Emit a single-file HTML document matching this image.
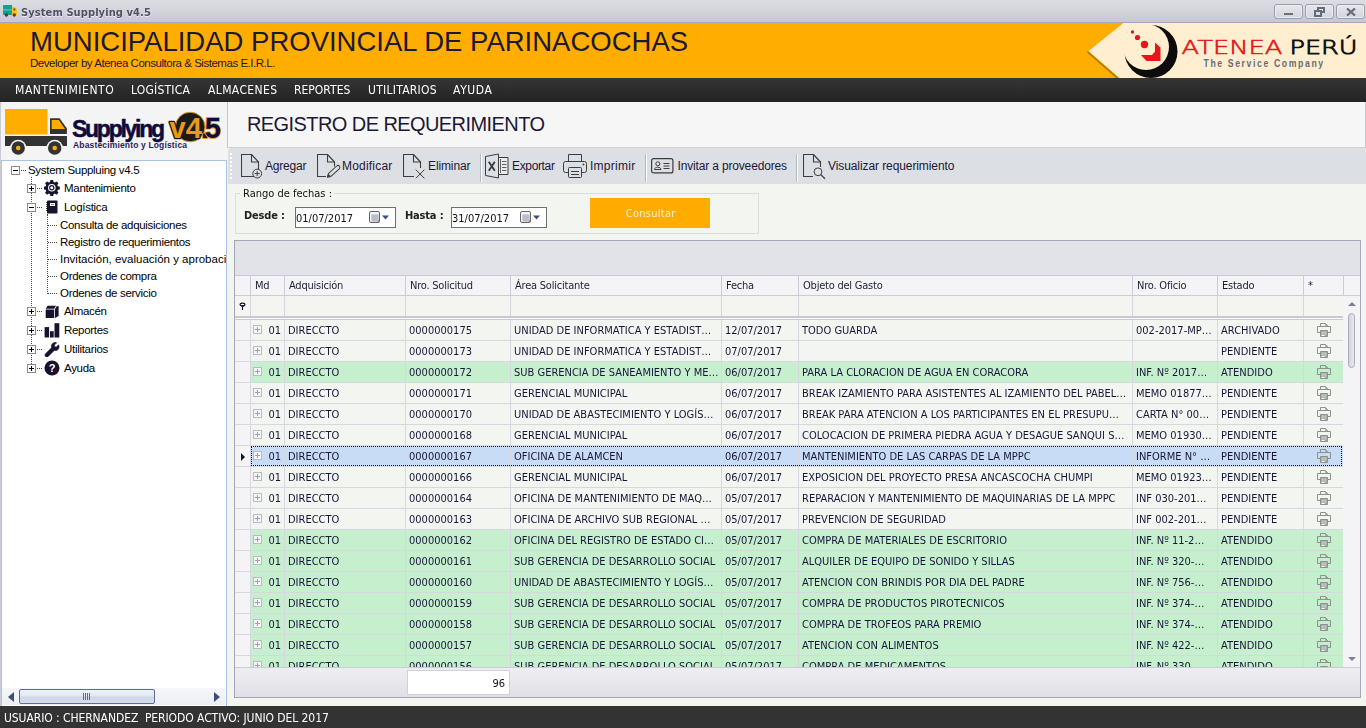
<!DOCTYPE html>
<html lang="es">
<head>
<meta charset="utf-8">
<title>System Supplying v4.5</title>
<style>
*{box-sizing:border-box;margin:0;padding:0}
html,body{width:1366px;height:728px;overflow:hidden}
body{position:relative;background:#f3f5f0;font-family:"DejaVu Sans","Liberation Sans",sans-serif;font-size:11px;color:#1b1b2b}
.k{display:inline-block;transform:scaleX(.9);transform-origin:0 50%;white-space:pre}
.kr{transform-origin:100% 50%}
.kc{transform-origin:50% 50%}
.abs{position:absolute}
i{font-style:normal}
/* title bar */
#tb{left:0;top:0;width:1366px;height:23px;background:linear-gradient(#dcdde2 0%,#d4d5dc 45%,#c6c8d2 100%);border-bottom:1px solid #a5a8ba}
#tb .ttl{left:21px;top:6px;font-weight:bold;font-size:11px;color:#4d5265;letter-spacing:.11px;white-space:pre;text-shadow:0 1px 0 #eee}
.wb{top:4px;width:29px;height:15px;border:1px solid #9a9dae;border-radius:3px;background:linear-gradient(#e6e7ec,#d2d4dc);box-shadow:inset 0 0 0 1px #ecedf1}
/* header */
#hd{left:0;top:23px;width:1366px;height:55px;background:#ffae00}
#hd h1{left:30px;top:3px;font-family:"Liberation Sans",sans-serif;font-weight:normal;font-size:27.5px;line-height:32px;color:#1c1836;white-space:pre}
#hd .sub{left:30px;top:33px;font-family:"Liberation Sans",sans-serif;font-size:11.5px;line-height:14px;color:#1c1836;white-space:pre;letter-spacing:-.47px}
/* menu */
#mn{left:0;top:78px;width:1366px;height:24px;background:linear-gradient(#353535,#232323)}
#mn span{position:absolute;top:4px;font-size:12px;line-height:16px;color:#fff;white-space:pre;font-family:"DejaVu Sans","Liberation Sans",sans-serif;transform:scaleX(.9);transform-origin:0 50%}
/* sidebar */
#sb{left:0;top:102px;width:227px;height:604px;background:#f4f4f4;border-left:1px solid #c8ccd4}
#tree{left:0;top:58px;width:226px;height:546px;background:#fff;border:1px solid #a9c3e6;border-bottom:none;overflow:hidden}
.tn{position:absolute;white-space:pre;font-family:"Liberation Sans",sans-serif;font-size:11.5px;line-height:14px;color:#000;letter-spacing:-.3px}
.bx{position:absolute;width:9px;height:9px;border:1px solid #8a8a8a;background:#fff}
.bx:before{content:"";position:absolute;left:1px;top:3px;width:5px;height:1px;background:#000}
.bx.p:after{content:"";position:absolute;left:3px;top:1px;width:1px;height:5px;background:#000}
.dv{position:absolute;width:0;border-left:1px dotted #444}
.dh{position:absolute;height:0;border-top:1px dotted #444}
/* main */
#spl{left:227px;top:102px;width:1px;height:46px;background:#c3c7d0}
#ttl{left:228px;top:102px;width:1138px;height:46px;background:#f6f6f6;border-bottom:1px solid #cdced6;border-right:1px solid #c4c5cc}
#ttl span{position:absolute;left:19px;top:8.500px;font-family:"Liberation Sans",sans-serif;font-size:20px;line-height:26px;color:#1c1836;white-space:pre;letter-spacing:-.58px}
#tool{left:228px;top:148px;width:1138px;height:36px;background:#dcdfe3;border-radius:4px 0 0 0}
#tool .t{position:absolute;top:10px;font-family:"Liberation Sans",sans-serif;font-size:12px;line-height:16px;color:#1c1836;white-space:pre}
#tool svg{position:absolute}
#tool .sp{position:absolute;top:6px;width:2px;height:28px;border-left:1px solid #b4b8c0;border-right:1px solid #fff}
.grip{position:absolute;left:2px;top:5px;width:2px;height:27px;background:repeating-linear-gradient(#fff 0 2px,transparent 2px 4px)}
/* filter group */
#grp{left:235px;top:193px;width:524px;height:41px;border:1px solid #dcdcdc}
#grp .lg{position:absolute;left:4px;top:-7px;width:94px;letter-spacing:0;padding:0 3px;background:#f3f5f0;line-height:14px;color:#111;white-space:pre}
.lb{position:absolute;font-weight:bold;white-space:pre;color:#222;line-height:14px;letter-spacing:-.2px;transform:scaleX(.9);transform-origin:0 50%}
.dt{position:absolute;top:207px;height:21px;border:1px solid #6f6f6f;background:#fff}
.dt span{position:absolute;left:0;top:4px;line-height:14px;color:#111;letter-spacing:0;white-space:pre;transform:scaleX(.9);transform-origin:0 50%}
#btn{left:590px;top:198px;width:120px;height:30px;background:#ffab00;color:#fff3d8;text-align:center;line-height:31px;letter-spacing:.3px;padding-left:1px}
/* grid */
#grid{left:234px;top:240px;width:1127px;height:458px;border:1px solid #a3a6b4;background:#f4f4f6;overflow:hidden}
#gp{left:0;top:0;width:1125px;height:35px;background:#e2e3e8;border-bottom:1px solid #c8cad4}
#hdr{left:0;top:35px;width:1125px;height:20px;background:#f4f4f7;border-bottom:1px solid #c9cbd5}
#hdr span{position:absolute;top:0;height:20px;line-height:19px;padding-left:4px;letter-spacing:-.25px;border-left:1px solid #c9cbd5;color:#1d1d33;white-space:pre}
#flt{left:0;top:55px;width:1108px;height:21px;background:#f4f5f1}
#flt span{position:absolute;top:0;height:21px;border-left:1px solid #d6d7de}
#sep{left:0;top:75px;width:1108px;height:4px;background:#fbfbfd;border-top:2px solid #c7c9d3;border-bottom:1px solid #c7c9d3}
#ind{left:0;top:55px;width:15px;height:371px;background:#f4f4f7}
.r{position:absolute;left:235px;width:1108px;height:21px;background:#f3f5f0;border-bottom:1px solid #d7d8df}
.r.g{background:#c6efce}
.r.s{background:#c9dcf5}
.sel{position:absolute;left:16px;top:0;width:1091px;height:20px;border:1px dotted #121230}
.ic{position:absolute;left:0;top:0;width:15px;height:20px;background:#f4f4f7}
.c{position:absolute;top:0;height:20px;line-height:22px;padding-left:3px;border-left:1px solid #d7d8df;white-space:pre;overflow:hidden;color:#16163a}
.c b{font-weight:normal}
.c.md{text-align:right;padding-right:3px}
.ex{position:absolute;left:2px;top:5px;width:9px;height:9px;border:1px solid #b9bcc4;background:#f6f6f8}
.ex:before{content:"";position:absolute;left:1px;top:3px;width:5px;height:1px;background:#9da0aa}
.ex:after{content:"";position:absolute;left:3px;top:1px;width:1px;height:5px;background:#9da0aa}
.c.pr svg{position:absolute;left:13px;top:3px}
.cur{position:absolute;left:6px;top:6.500px;width:0;height:0;border-left:4px solid #15152e;border-top:4px solid transparent;border-bottom:4px solid transparent}
#vs{left:1108px;top:55px;width:17px;height:371px;background:#f4f4f6}
#ft{left:0;top:426px;width:1125px;height:30px;background:linear-gradient(#eeeef2,#dfdfe6);border-top:1px solid #c9cbd5}
#ft b{font-weight:normal}
#hdr b{font-weight:normal}
#ft span{position:absolute;left:172px;top:2px;width:103px;height:25px;background:#fff;border:1px solid #d0d1d9;text-align:right;padding-right:4px;line-height:25px;color:#111}
/* status */
#st{left:0;top:706px;width:1366px;height:22px;background:#333;color:#fff;font-size:12px;line-height:25px;padding-left:4px;white-space:pre;letter-spacing:-.09px}
</style>
</head>
<body>

<!-- title bar -->
<div id="tb" class="abs">
 <svg class="abs" style="left:0;top:0" width="20" height="20" viewBox="0 0 20 20">
  <rect x="3" y="5" width="9.200" height="10" rx=".8" fill="#13a08c"/><rect x="3" y="9" width="9.200" height="1.600" fill="#4cb9a9"/>
  <path d="M12.200 7.200h3.300l1.600 2.800v5h-4.900z" fill="#ffc400"/><rect x="13.300" y="8.300" width="2" height="2.200" fill="#7a5a4a"/>
  <circle cx="6.400" cy="15" r="1.700" fill="#5a3a30"/><circle cx="14.300" cy="15" r="1.700" fill="#5a3a30"/>
 </svg>
 <span class="abs ttl k">System Supplying v4.5</span>
 <div class="abs wb" style="left:1274px"><i class="abs" style="left:9px;top:8px;width:9px;height:2px;background:#6a6f82"></i></div>
 <div class="abs wb" style="left:1305px">
  <i class="abs" style="left:11px;top:2px;width:8px;height:6px;border:2px solid #666b7c;border-top-width:2px"></i>
  <i class="abs" style="left:8px;top:5px;width:8px;height:7px;border:2px solid #666b7c;background:#dcdde3"></i>
 </div>
 <div class="abs wb" style="left:1336px"><svg class="abs" style="left:9px;top:3px" width="10" height="8" viewBox="0 0 10 8"><path d="M1 0.500l8 7M9 0.500l-8 7" stroke="#666b7c" stroke-width="2.200" fill="none"/></svg></div>
</div>

<!-- header -->
<div id="hd" class="abs">
 <h1 class="abs">MUNICIPALIDAD PROVINCIAL DE PARINACOCHAS</h1>
 <span class="abs sub">Developer by Atenea Consultora &amp; Sistemas E.I.R.L.</span>
 <svg class="abs" style="left:1080px;top:0" width="286" height="55" viewBox="1080 23 286 55">
  <path d="M1087.300 51.600L1118.300 78.800" stroke="#7a5c10" stroke-opacity=".6" stroke-width="1.800" fill="none"/>
  <path d="M1088.500 51L1123.500 23h242.500v55h-246.400z" fill="#ffefd0"/>
  <!-- crescent -->
  <mask id="mk" maskUnits="userSpaceOnUse" x="1080" y="23" width="286" height="55"><rect x="1080" y="23" width="286" height="55" fill="#fff"/><circle cx="1146" cy="47" r="23" fill="#000"/></mask><circle cx="1151" cy="51.500" r="26.500" fill="#0c0c0c" mask="url(#mk)"/>
  <circle cx="1132.500" cy="32" r="1.700" fill="#e3171b"/><circle cx="1137.500" cy="37.500" r="2.600" fill="#e3171b"/><circle cx="1144.500" cy="44.500" r="3.700" fill="#e3171b"/>
  <path d="M1155 42.500l5.500 5v13.500h-14l-5.500-6h11l3-3.500z" fill="#e3171b"/>
  <text x="1181.500" y="54" font-family="DejaVu Sans Light,Liberation Sans,sans-serif" font-weight="200" font-size="19.500" fill="#e3171b" stroke="#e3171b" stroke-width=".6" textLength="101" lengthAdjust="spacingAndGlyphs">ATENEA</text>
  <text x="1289.500" y="54" font-family="DejaVu Sans Light,Liberation Sans,sans-serif" font-weight="200" font-size="19.500" fill="#111" stroke="#111" stroke-width=".85" textLength="68" lengthAdjust="spacingAndGlyphs">PERÚ</text>
  <text transform="translate(1203.500 67.200) scale(.76 1)" font-family="Liberation Sans,sans-serif" font-weight="bold" font-size="11.500" fill="#6b6b70" textLength="157.500" lengthAdjust="spacing">The Service Company</text>
 </svg>
</div>

<!-- menu -->
<div id="mn" class="abs">
 <span style="left:14.500px;letter-spacing:.62px">MANTENIMIENTO</span>
 <span style="left:130.500px;letter-spacing:.22px">LOGÍSTICA</span>
 <span style="left:208px;letter-spacing:.42px">ALMACENES</span>
 <span style="left:294px">REPORTES</span>
 <span style="left:367.500px;letter-spacing:.28px">UTILITARIOS</span>
 <span style="left:453px;letter-spacing:.67px">AYUDA</span>
</div>

<!-- sidebar -->
<div id="sb" class="abs">
 <svg class="abs" style="left:-1px;top:0" width="227" height="58" viewBox="0 102 227 58">
  <rect x="5" y="109" width="42.500" height="25.500" fill="#ffae00"/>
  <path d="M50 118.200h9.600l7.300 10.400v5.400h-16.900z" fill="#333"/><path d="M51.700 120h7.100l6.200 9h-13.300z" fill="#ffae00"/>
  <rect x="5" y="136" width="62" height="10" fill="#333"/>
  <circle cx="18.200" cy="148" r="8.300" fill="#f4f4f4"/><circle cx="54.700" cy="148" r="8.300" fill="#f4f4f4"/>
  <circle cx="18.200" cy="148" r="6.700" fill="#333"/><circle cx="54.700" cy="148" r="6.700" fill="#333"/>
  <circle cx="18.200" cy="148" r="2.300" fill="#ffae00"/><circle cx="54.700" cy="148" r="2.300" fill="#ffae00"/>
  <circle cx="190.200" cy="127" r="14.800" fill="#1c1a1a" stroke="#e79a1c" stroke-width=".9"/>
  <text x="72" y="137" font-family="Liberation Sans,sans-serif" font-weight="bold" font-size="23" fill="#100b3c" stroke="#100b3c" stroke-width=".5" textLength="93" lengthAdjust="spacing">Supplying</text>
  <text x="73" y="148" font-family="Liberation Sans,sans-serif" font-weight="bold" font-size="8.500" fill="#2a1d5e" textLength="114" lengthAdjust="spacing">Abastecimiento y Logística</text>
  <text x="169.500" y="138" font-family="Liberation Sans,sans-serif" font-weight="bold" font-size="29" fill="#e79a1c" stroke="#1c1a1a" stroke-width="2.600" stroke-linejoin="round" paint-order="stroke" textLength="32.500" lengthAdjust="spacingAndGlyphs">v4</text>
  <text x="201" y="138" font-family="Liberation Sans,sans-serif" font-weight="bold" font-size="29" fill="#100b3c" stroke="#e79a1c" stroke-width="1.800" stroke-linejoin="round" paint-order="stroke" textLength="20" lengthAdjust="spacing">.5</text>
 </svg>
 <div id="tree" class="abs">
  <div class="abs" style="left:-2px;top:-161px;width:0;height:0">
<i class="dv" style="left:31px;top:177px;height:191px"></i>
<i class="dv" style="left:47px;top:214px;height:80px"></i>
<i class="dh" style="left:21px;top:170px;width:5px"></i>
<i class="bx" style="left:11px;top:166px"></i>
<span class="tn" style="left:28px;top:163px;">System Suppluing v4.5</span>
<i class="dh" style="left:37px;top:188px;width:5px"></i>
<i class="bx p" style="left:27px;top:184px"></i>
<svg class="abs" style="left:44px;top:180px" width="16" height="16" viewBox="0 0 16 16"><g fill="#17122e"><path d="M6.600.5h2.800l.4 2.100 1.300.55 1.800-1.200 2 2-1.200 1.800.55 1.300 2.100.4v2.800l-2.100.4-.55 1.300 1.200 1.800-2 2-1.800-1.200-1.300.55-.4 2.100h-2.800l-.4-2.100-1.300-.55-1.800 1.200-2-2 1.200-1.800-.55-1.300-2.100-.4v-2.800l2.100-.4.55-1.300-1.200-1.800 2-2 1.800 1.200 1.300-.55z" transform="translate(0,-.5) scale(.97)"/><circle cx="7.800" cy="7.800" r="3.800" fill="#fff"/><circle cx="7.800" cy="7.800" r="2.700" fill="#17122e"/><circle cx="7.800" cy="7.800" r="1.500" fill="#fff"/></g></svg>
<span class="tn" style="left:64px;top:181px;">Mantenimiento</span>
<i class="dh" style="left:37px;top:207px;width:5px"></i>
<i class="bx" style="left:27px;top:203px"></i>
<svg class="abs" style="left:44px;top:199px" width="16" height="16" viewBox="0 0 16 16"><g><rect x="3" y="1.500" width="10.500" height="13" rx="1" fill="#17122e"/><path d="M2 3.500h1.500M2 5.500h1.500M2 7.500h1.500M2 9.500h1.500M2 11.500h1.500" stroke="#17122e" stroke-width=".8"/><rect x="6" y="4" width="5" height="3" fill="#fff"/><rect x="7" y="5" width="3" height="1" fill="#8a86a0"/></g></svg>
<span class="tn" style="left:64px;top:200px;">Logística</span>
<i class="dh" style="left:37px;top:311px;width:5px"></i>
<i class="bx p" style="left:27px;top:307px"></i>
<svg class="abs" style="left:44px;top:303px" width="16" height="16" viewBox="0 0 16 16"><g fill="#17122e"><path d="M1.700 5.800l1.800-3h8.500l-1.800 3z"/><path d="M1.700 6.500h8.500v8.500h-8.500z"/><path d="M11 6l1.900-3.100 1.700.3v9.800l-3.600 2z"/></g></svg>
<span class="tn" style="left:64px;top:304px;">Almacén</span>
<i class="dh" style="left:37px;top:330px;width:5px"></i>
<i class="bx p" style="left:27px;top:326px"></i>
<svg class="abs" style="left:44px;top:322px" width="16" height="16" viewBox="0 0 16 16"><g fill="#17122e"><rect x=".6" y="5.100" width="4.500" height="10.400"/><rect x="6" y="9.200" width="3.700" height="6.300"/><rect x="10.500" y="1.200" width="4.800" height="14.300"/></g></svg>
<span class="tn" style="left:64px;top:323px;">Reportes</span>
<i class="dh" style="left:37px;top:349px;width:5px"></i>
<i class="bx p" style="left:27px;top:345px"></i>
<svg class="abs" style="left:44px;top:341px" width="16" height="16" viewBox="0 0 16 16"><g fill="#17122e" stroke="#17122e" stroke-width=".7" stroke-linejoin="round"><path d="M14.600 3.200l-2.300 2.300-1.700-.3-.3-1.700 2.300-2.300c-1.700-.6-3.400-.1-4.400 1.200-.9 1.100-1 2.500-.6 3.700l-6 6c-.8.800-.8 2 0 2.700.7.700 1.900.7 2.600 0l6-6c1.300.4 2.800.2 3.800-.8 1.100-1.100 1.300-3 .6-4.800z" transform="translate(0,.6)"/></g></svg>
<span class="tn" style="left:64px;top:342px;">Utilitarios</span>
<i class="dh" style="left:37px;top:368px;width:5px"></i>
<i class="bx p" style="left:27px;top:364px"></i>
<svg class="abs" style="left:44px;top:360px" width="16" height="16" viewBox="0 0 16 16"><g><circle cx="8" cy="8" r="7.500" fill="#17122e"/><text x="8" y="12" text-anchor="middle" font-family="Liberation Sans,sans-serif" font-weight="bold" font-size="11" fill="#fff">?</text></g></svg>
<span class="tn" style="left:64px;top:361px;">Ayuda</span>
<i class="dh" style="left:48px;top:225px;width:9px"></i>
<span class="tn" style="left:60px;top:218px;">Consulta de adquisiciones</span>
<i class="dh" style="left:48px;top:242px;width:9px"></i>
<span class="tn" style="left:60px;top:235px;">Registro de requerimientos</span>
<i class="dh" style="left:48px;top:259px;width:9px"></i>
<span class="tn" style="left:60px;top:252px;letter-spacing:0">Invitación, evaluación y aprobación</span>
<i class="dh" style="left:48px;top:276px;width:9px"></i>
<span class="tn" style="left:60px;top:269px;">Ordenes de compra</span>
<i class="dh" style="left:48px;top:293px;width:9px"></i>
<span class="tn" style="left:60px;top:286px;">Ordenes de servicio</span>
  </div>
  <div class="abs" style="left:0;top:527px;width:224px;height:17px;background:linear-gradient(#f6f7fa,#eceef4)">
   <i class="abs" style="left:6px;top:4px;width:0;height:0;border-top:5px solid transparent;border-bottom:5px solid transparent;border-right:6px solid #3f4c77"></i>
   <i class="abs" style="left:17px;top:1px;width:136px;height:15px;border:1px solid #5d6c96;border-radius:2px;background:linear-gradient(#eef1f7 0%,#e3e8f1 48%,#cdd6e6 52%,#d6deeb 100%)"></i>
   <i class="abs" style="left:81px;top:5px;width:8px;height:7px;background:repeating-linear-gradient(90deg,#5d6c96 0 1px,transparent 1px 2px)"></i>
   <i class="abs" style="left:212px;top:4px;width:0;height:0;border-top:5px solid transparent;border-bottom:5px solid transparent;border-left:6px solid #3f4c77"></i>
  </div>
 </div>
</div>
<div id="spl" class="abs"></div>

<!-- main -->
<div id="ttl" class="abs"><span>REGISTRO DE REQUERIMIENTO</span></div>
<div id="tool" class="abs">
 <i class="grip"></i>
 <svg style="left:13px;top:6px" width="24" height="26" viewBox="0 0 24 26"><g fill="none" stroke="#3d3d3d" stroke-width="1.1" stroke-linejoin="round">
   <path d="M.5 .5h10l7 7.500v14.500h-17z"/><path d="M10.500 .5v7.500h7"/>
  </g><circle cx="16.200" cy="19.600" r="4.400" fill="#dcdfe3" stroke="#3d3d3d"/><path d="M13.700 19.600h5M16.200 17.100v5" stroke="#3d3d3d" fill="none"/></svg>
<span class="t" style="left:37px;letter-spacing:-0.2px">Agregar</span>
<svg style="left:89px;top:6px" width="25" height="26" viewBox="0 0 25 26"><g fill="none" stroke="#3d3d3d" stroke-width="1.1" stroke-linejoin="round">
   <path d="M.5 .5h10l7 7.500v14.500h-17z"/><path d="M10.500 .5v7.500h7"/>
  </g><rect x="9" y="12.500" width="10" height="11" fill="#dcdfe3"/><g transform="translate(10.300 23.200) rotate(-42.500)"><path d="M0 0l3.200-1.900h11.300a1.900 1.900 0 0 1 0 3.800h-11.300z" fill="#dcdfe3" stroke="#3d3d3d" stroke-linejoin="round"/><path d="M0 0l3.200-1.900v3.800z" fill="#3d3d3d"/></g></svg>
<span class="t" style="left:114px;letter-spacing:0.2px">Modificar</span>
<svg style="left:175px;top:6px" width="24" height="26" viewBox="0 0 24 26"><g fill="none" stroke="#3d3d3d" stroke-width="1.1" stroke-linejoin="round">
   <path d="M.5 .5h10l7 7.500v14.500h-17z"/><path d="M10.500 .5v7.500h7"/>
  </g><rect x="11" y="14" width="13" height="12" fill="#dcdfe3"/><path d="M12.800 15.700l8.600 8.600M21.400 15.700l-8.600 8.600" stroke="#3d3d3d" fill="none"/></svg>
<span class="t" style="left:200px;letter-spacing:-0.12px">Eliminar</span>
<i class="sp" style="left:252px"></i>
<svg style="left:257px;top:5px" width="24" height="26" viewBox="0 0 24 26"><path d="M13.500 4.500h9.500v17h-9.500" fill="#e9ebee" stroke="#3d3d3d"/><path d="M17 8.500h4.500M17 11.500h4.500M17 14.500h4.500M17 17.500h4.500M15.500 6v14" stroke="#3d3d3d" stroke-width=".8" fill="none"/><path d="M.5 3.500l13-2.500v24l-13-2.500z" fill="#dcdfe3" stroke="#3d3d3d" stroke-linejoin="round"/><path d="M3.800 8.800l6 9M9.800 8.800l-6 9" stroke="#3a3a3a" stroke-width="1.800" fill="none"/></svg>
<span class="t" style="left:284px;letter-spacing:-0.35px">Exportar</span>
<svg style="left:335px;top:5px" width="25" height="26" viewBox="0 0 25 26"><path d="M5.500 8.500v-7h13v7" fill="none" stroke="#3d3d3d"/><rect x=".5" y="8.500" width="23" height="11" rx="2" fill="#dcdfe3" stroke="#3d3d3d"/><rect x="5.500" y="14.500" width="13" height="10" rx="1" fill="#dcdfe3" stroke="#3d3d3d"/><path d="M8 18.500h8M8 21.500h8" stroke="#3d3d3d" fill="none"/><circle cx="20.500" cy="11.500" r=".9" fill="#3d3d3d"/></svg>
<span class="t" style="left:362px;letter-spacing:0.26px">Imprimir</span>
<i class="sp" style="left:417px"></i>
<svg style="left:423px;top:10px" width="23" height="16" viewBox="0 0 23 16"><rect x=".6" y=".6" width="21.300" height="14.300" rx="2" fill="none" stroke="#3d3d3d" stroke-width="1.200"/><circle cx="6.800" cy="5.800" r="2" fill="none" stroke="#3d3d3d"/><path d="M3.500 11.500c0-3 6.500-3 6.500 0z" fill="none" stroke="#3d3d3d"/><path d="M12.500 5.500h6M12.500 8h6M12.500 10.500h6" stroke="#3d3d3d" fill="none"/></svg>
<span class="t" style="left:449.5px;letter-spacing:-0.16px">Invitar a proveedores</span>
<i class="sp" style="left:568px"></i>
<svg style="left:575px;top:6px" width="24" height="26" viewBox="0 0 24 26"><g fill="none" stroke="#3d3d3d" stroke-width="1.1" stroke-linejoin="round">
   <path d="M.5 .5h10l7 7.500v14.500h-17z"/><path d="M10.500 .5v7.500h7"/>
  </g><rect x="10" y="13" width="14" height="12" fill="#dcdfe3"/><circle cx="15" cy="17.800" r="3.900" fill="none" stroke="#3d3d3d"/><path d="M17.800 20.600l4.200 4.200" stroke="#3d3d3d" stroke-width="1.300" fill="none"/></svg>
<span class="t" style="left:600px;letter-spacing:-0.09px">Visualizar requerimiento</span>
</div>

<div id="grp" class="abs"><span class="lg"><span class="k">Rango de fechas :</span></span></div>
<span class="lb" style="left:244px;top:209px">Desde :</span>
<div class="dt" style="left:295px;width:101px"><span>01/07/2017</span><svg style="position:absolute;left:73px;top:3px" width="22" height="13" viewBox="0 0 22 13"><rect x=".5" y=".5" width="10" height="11" rx="1.500" fill="#f3f7fe" stroke="#6e6262"/><rect x="2.500" y="3.500" width="7" height="7" fill="#a9adba"/><path d="M3.500 5h5M3.500 7h5M3.500 9h5" stroke="#eef0f6" stroke-width="1" stroke-dasharray="1 1" fill="none"/><path d="M8.500 10.500h2v-2z" fill="#6e6262"/><path d="M13 4.500h7l-3.500 4z" fill="#3a4f80"/></svg></div>
<span class="lb" style="left:405px;top:209px">Hasta :</span>
<div class="dt" style="left:451px;width:96px"><span>31/07/2017</span><svg style="position:absolute;left:68px;top:3px" width="22" height="13" viewBox="0 0 22 13"><rect x=".5" y=".5" width="10" height="11" rx="1.500" fill="#f3f7fe" stroke="#6e6262"/><rect x="2.500" y="3.500" width="7" height="7" fill="#a9adba"/><path d="M3.500 5h5M3.500 7h5M3.500 9h5" stroke="#eef0f6" stroke-width="1" stroke-dasharray="1 1" fill="none"/><path d="M8.500 10.500h2v-2z" fill="#6e6262"/><path d="M13 4.500h7l-3.500 4z" fill="#3a4f80"/></svg></div>
<div id="btn" class="abs"><span class="k kc">Consultar</span></div>

<!-- grid -->
<div id="grid" class="abs">
 <div id="gp" class="abs"></div>
 <div id="hdr" class="abs">
  <span style="left:15px;width:34px"><b class="k">Md</b></span><span style="left:49px;width:121px"><b class="k">Adquisición</b></span><span style="left:170px;width:105px"><b class="k">Nro. Solicitud</b></span><span style="left:275px;width:211px"><b class="k">Área Solicitante</b></span><span style="left:486px;width:77px"><b class="k">Fecha</b></span><span style="left:563px;width:334px"><b class="k">Objeto del Gasto</b></span><span style="left:897px;width:85px"><b class="k">Nro. Oficio</b></span><span style="left:982px;width:86px"><b class="k">Estado</b></span><span style="left:1068px;width:40px"><b class="k">*</b></span><span style="left:1108px;width:17px"></span>
 </div>
 <div id="ind" class="abs"></div>
 <div id="flt" class="abs">
  <span style="left:15px"></span><span style="left:49px"></span><span style="left:170px"></span><span style="left:275px"></span><span style="left:486px"></span><span style="left:563px"></span><span style="left:897px"></span><span style="left:982px"></span><span style="left:1068px"></span>
 </div>
 <div id="sep" class="abs"></div>
 <svg class="abs" style="left:4px;top:61px" width="8" height="9" viewBox="0 0 8 9"><ellipse cx="3.500" cy="2.500" rx="2.400" ry="1.400" fill="#fff" stroke="#14142a" stroke-width="1.200"/><path d="M1.200 3.300l2.300 2.200l2.300-2.200z" fill="#14142a"/><path d="M3.500 4v4" stroke="#14142a" stroke-width="1.100"/></svg>
 <div class="abs" style="left:-235px;top:-241px;width:0;height:0">
<div class="r" style="top:320px"><span class="ic"></span><span class="c md" style="left:15px;width:34px"><i class="ex"></i><b class="k kr">01</b></span><span class="c" style="left:49px;width:121px"><b class="k">DIRECCTO</b></span><span class="c" style="left:170px;width:105px"><b class="k">0000000175</b></span><span class="c" style="left:275px;width:211px"><b class="k">UNIDAD DE INFORMATICA Y ESTADIST…</b></span><span class="c" style="left:486px;width:77px"><b class="k">12/07/2017</b></span><span class="c" style="left:563px;width:334px"><b class="k">TODO GUARDA</b></span><span class="c" style="left:897px;width:85px"><b class="k">002-2017-MP…</b></span><span class="c" style="left:982px;width:86px"><b class="k">ARCHIVADO</b></span><span class="c pr" style="left:1068px;width:40px"><svg width="14" height="14" viewBox="0 0 14 14"><g fill="none" stroke="#8b918d" stroke-width="1">
   <path d="M3.500 3.500v-3h5l2 2v1"/><path d="M8.500 .5v2h2" stroke-opacity=".7"/>
   <path d="M3 9.500h-2.500v-6h13v6h-2.500"/>
   <path d="M3.500 7.500h7v6h-7z" fill="#a7ada9"/>
   <path d="M5.500 8.500v3M7 8.500v3M8.500 8.500v3" stroke="#c5c9c6"/>
   <path d="M4.500 12.500h3" stroke="#fff"/>
  </g></svg></span></div>
<div class="r" style="top:341px"><span class="ic"></span><span class="c md" style="left:15px;width:34px"><i class="ex"></i><b class="k kr">01</b></span><span class="c" style="left:49px;width:121px"><b class="k">DIRECCTO</b></span><span class="c" style="left:170px;width:105px"><b class="k">0000000173</b></span><span class="c" style="left:275px;width:211px"><b class="k">UNIDAD DE INFORMATICA Y ESTADIST…</b></span><span class="c" style="left:486px;width:77px"><b class="k">07/07/2017</b></span><span class="c" style="left:563px;width:334px"></span><span class="c" style="left:897px;width:85px"></span><span class="c" style="left:982px;width:86px"><b class="k">PENDIENTE</b></span><span class="c pr" style="left:1068px;width:40px"><svg width="14" height="14" viewBox="0 0 14 14"><g fill="none" stroke="#8b918d" stroke-width="1">
   <path d="M3.500 3.500v-3h5l2 2v1"/><path d="M8.500 .5v2h2" stroke-opacity=".7"/>
   <path d="M3 9.500h-2.500v-6h13v6h-2.500"/>
   <path d="M3.500 7.500h7v6h-7z" fill="#a7ada9"/>
   <path d="M5.500 8.500v3M7 8.500v3M8.500 8.500v3" stroke="#c5c9c6"/>
   <path d="M4.500 12.500h3" stroke="#fff"/>
  </g></svg></span></div>
<div class="r g" style="top:362px"><span class="ic"></span><span class="c md" style="left:15px;width:34px"><i class="ex"></i><b class="k kr">01</b></span><span class="c" style="left:49px;width:121px"><b class="k">DIRECCTO</b></span><span class="c" style="left:170px;width:105px"><b class="k">0000000172</b></span><span class="c" style="left:275px;width:211px"><b class="k">SUB GERENCIA DE SANEAMIENTO Y ME…</b></span><span class="c" style="left:486px;width:77px"><b class="k">06/07/2017</b></span><span class="c" style="left:563px;width:334px"><b class="k">PARA LA CLORACION DE AGUA EN CORACORA</b></span><span class="c" style="left:897px;width:85px"><b class="k">INF. Nº 2017…</b></span><span class="c" style="left:982px;width:86px"><b class="k">ATENDIDO</b></span><span class="c pr" style="left:1068px;width:40px"><svg width="14" height="14" viewBox="0 0 14 14"><g fill="none" stroke="#8b918d" stroke-width="1">
   <path d="M3.500 3.500v-3h5l2 2v1"/><path d="M8.500 .5v2h2" stroke-opacity=".7"/>
   <path d="M3 9.500h-2.500v-6h13v6h-2.500"/>
   <path d="M3.500 7.500h7v6h-7z" fill="#a7ada9"/>
   <path d="M5.500 8.500v3M7 8.500v3M8.500 8.500v3" stroke="#c5c9c6"/>
   <path d="M4.500 12.500h3" stroke="#fff"/>
  </g></svg></span></div>
<div class="r" style="top:383px"><span class="ic"></span><span class="c md" style="left:15px;width:34px"><i class="ex"></i><b class="k kr">01</b></span><span class="c" style="left:49px;width:121px"><b class="k">DIRECCTO</b></span><span class="c" style="left:170px;width:105px"><b class="k">0000000171</b></span><span class="c" style="left:275px;width:211px"><b class="k">GERENCIAL MUNICIPAL</b></span><span class="c" style="left:486px;width:77px"><b class="k">06/07/2017</b></span><span class="c" style="left:563px;width:334px"><b class="k">BREAK IZAMIENTO PARA ASISTENTES AL IZAMIENTO DEL PABEL…</b></span><span class="c" style="left:897px;width:85px"><b class="k">MEMO 01877…</b></span><span class="c" style="left:982px;width:86px"><b class="k">PENDIENTE</b></span><span class="c pr" style="left:1068px;width:40px"><svg width="14" height="14" viewBox="0 0 14 14"><g fill="none" stroke="#8b918d" stroke-width="1">
   <path d="M3.500 3.500v-3h5l2 2v1"/><path d="M8.500 .5v2h2" stroke-opacity=".7"/>
   <path d="M3 9.500h-2.500v-6h13v6h-2.500"/>
   <path d="M3.500 7.500h7v6h-7z" fill="#a7ada9"/>
   <path d="M5.500 8.500v3M7 8.500v3M8.500 8.500v3" stroke="#c5c9c6"/>
   <path d="M4.500 12.500h3" stroke="#fff"/>
  </g></svg></span></div>
<div class="r" style="top:404px"><span class="ic"></span><span class="c md" style="left:15px;width:34px"><i class="ex"></i><b class="k kr">01</b></span><span class="c" style="left:49px;width:121px"><b class="k">DIRECCTO</b></span><span class="c" style="left:170px;width:105px"><b class="k">0000000170</b></span><span class="c" style="left:275px;width:211px"><b class="k">UNIDAD DE ABASTECIMIENTO Y LOGÍS…</b></span><span class="c" style="left:486px;width:77px"><b class="k">06/07/2017</b></span><span class="c" style="left:563px;width:334px"><b class="k">BREAK PARA ATENCION A LOS PARTICIPANTES EN EL PRESUPU…</b></span><span class="c" style="left:897px;width:85px"><b class="k">CARTA N° 00…</b></span><span class="c" style="left:982px;width:86px"><b class="k">PENDIENTE</b></span><span class="c pr" style="left:1068px;width:40px"><svg width="14" height="14" viewBox="0 0 14 14"><g fill="none" stroke="#8b918d" stroke-width="1">
   <path d="M3.500 3.500v-3h5l2 2v1"/><path d="M8.500 .5v2h2" stroke-opacity=".7"/>
   <path d="M3 9.500h-2.500v-6h13v6h-2.500"/>
   <path d="M3.500 7.500h7v6h-7z" fill="#a7ada9"/>
   <path d="M5.500 8.500v3M7 8.500v3M8.500 8.500v3" stroke="#c5c9c6"/>
   <path d="M4.500 12.500h3" stroke="#fff"/>
  </g></svg></span></div>
<div class="r" style="top:425px"><span class="ic"></span><span class="c md" style="left:15px;width:34px"><i class="ex"></i><b class="k kr">01</b></span><span class="c" style="left:49px;width:121px"><b class="k">DIRECCTO</b></span><span class="c" style="left:170px;width:105px"><b class="k">0000000168</b></span><span class="c" style="left:275px;width:211px"><b class="k">GERENCIAL MUNICIPAL</b></span><span class="c" style="left:486px;width:77px"><b class="k">06/07/2017</b></span><span class="c" style="left:563px;width:334px"><b class="k">COLOCACION DE PRIMERA PIEDRA AGUA Y DESAGUE SANQUI S…</b></span><span class="c" style="left:897px;width:85px"><b class="k">MEMO 01930…</b></span><span class="c" style="left:982px;width:86px"><b class="k">PENDIENTE</b></span><span class="c pr" style="left:1068px;width:40px"><svg width="14" height="14" viewBox="0 0 14 14"><g fill="none" stroke="#8b918d" stroke-width="1">
   <path d="M3.500 3.500v-3h5l2 2v1"/><path d="M8.500 .5v2h2" stroke-opacity=".7"/>
   <path d="M3 9.500h-2.500v-6h13v6h-2.500"/>
   <path d="M3.500 7.500h7v6h-7z" fill="#a7ada9"/>
   <path d="M5.500 8.500v3M7 8.500v3M8.500 8.500v3" stroke="#c5c9c6"/>
   <path d="M4.500 12.500h3" stroke="#fff"/>
  </g></svg></span></div>
<div class="r s" style="top:446px"><span class="ic"><i class="cur"></i></span><span class="c md" style="left:15px;width:34px"><i class="ex"></i><b class="k kr">01</b></span><span class="c" style="left:49px;width:121px"><b class="k">DIRECCTO</b></span><span class="c" style="left:170px;width:105px"><b class="k">0000000167</b></span><span class="c" style="left:275px;width:211px"><b class="k">OFICINA DE ALAMCEN</b></span><span class="c" style="left:486px;width:77px"><b class="k">06/07/2017</b></span><span class="c" style="left:563px;width:334px"><b class="k">MANTENIMIENTO DE LAS CARPAS DE LA MPPC</b></span><span class="c" style="left:897px;width:85px"><b class="k">INFORME N° …</b></span><span class="c" style="left:982px;width:86px"><b class="k">PENDIENTE</b></span><span class="c pr" style="left:1068px;width:40px"><svg width="14" height="14" viewBox="0 0 14 14"><g fill="none" stroke="#8b918d" stroke-width="1">
   <path d="M3.500 3.500v-3h5l2 2v1"/><path d="M8.500 .5v2h2" stroke-opacity=".7"/>
   <path d="M3 9.500h-2.500v-6h13v6h-2.500"/>
   <path d="M3.500 7.500h7v6h-7z" fill="#a7ada9"/>
   <path d="M5.500 8.500v3M7 8.500v3M8.500 8.500v3" stroke="#c5c9c6"/>
   <path d="M4.500 12.500h3" stroke="#fff"/>
  </g></svg></span><i class="sel"></i></div>
<div class="r" style="top:467px"><span class="ic"></span><span class="c md" style="left:15px;width:34px"><i class="ex"></i><b class="k kr">01</b></span><span class="c" style="left:49px;width:121px"><b class="k">DIRECCTO</b></span><span class="c" style="left:170px;width:105px"><b class="k">0000000166</b></span><span class="c" style="left:275px;width:211px"><b class="k">GERENCIAL MUNICIPAL</b></span><span class="c" style="left:486px;width:77px"><b class="k">06/07/2017</b></span><span class="c" style="left:563px;width:334px"><b class="k">EXPOSICION DEL PROYECTO PRESA ANCASCOCHA CHUMPI</b></span><span class="c" style="left:897px;width:85px"><b class="k">MEMO 01923…</b></span><span class="c" style="left:982px;width:86px"><b class="k">PENDIENTE</b></span><span class="c pr" style="left:1068px;width:40px"><svg width="14" height="14" viewBox="0 0 14 14"><g fill="none" stroke="#8b918d" stroke-width="1">
   <path d="M3.500 3.500v-3h5l2 2v1"/><path d="M8.500 .5v2h2" stroke-opacity=".7"/>
   <path d="M3 9.500h-2.500v-6h13v6h-2.500"/>
   <path d="M3.500 7.500h7v6h-7z" fill="#a7ada9"/>
   <path d="M5.500 8.500v3M7 8.500v3M8.500 8.500v3" stroke="#c5c9c6"/>
   <path d="M4.500 12.500h3" stroke="#fff"/>
  </g></svg></span></div>
<div class="r" style="top:488px"><span class="ic"></span><span class="c md" style="left:15px;width:34px"><i class="ex"></i><b class="k kr">01</b></span><span class="c" style="left:49px;width:121px"><b class="k">DIRECCTO</b></span><span class="c" style="left:170px;width:105px"><b class="k">0000000164</b></span><span class="c" style="left:275px;width:211px"><b class="k">OFICINA DE MANTENIMIENTO DE MAQ…</b></span><span class="c" style="left:486px;width:77px"><b class="k">05/07/2017</b></span><span class="c" style="left:563px;width:334px"><b class="k">REPARACION Y MANTENIMIENTO DE MAQUINARIAS DE LA MPPC</b></span><span class="c" style="left:897px;width:85px"><b class="k">INF 030-201…</b></span><span class="c" style="left:982px;width:86px"><b class="k">PENDIENTE</b></span><span class="c pr" style="left:1068px;width:40px"><svg width="14" height="14" viewBox="0 0 14 14"><g fill="none" stroke="#8b918d" stroke-width="1">
   <path d="M3.500 3.500v-3h5l2 2v1"/><path d="M8.500 .5v2h2" stroke-opacity=".7"/>
   <path d="M3 9.500h-2.500v-6h13v6h-2.500"/>
   <path d="M3.500 7.500h7v6h-7z" fill="#a7ada9"/>
   <path d="M5.500 8.500v3M7 8.500v3M8.500 8.500v3" stroke="#c5c9c6"/>
   <path d="M4.500 12.500h3" stroke="#fff"/>
  </g></svg></span></div>
<div class="r" style="top:509px"><span class="ic"></span><span class="c md" style="left:15px;width:34px"><i class="ex"></i><b class="k kr">01</b></span><span class="c" style="left:49px;width:121px"><b class="k">DIRECCTO</b></span><span class="c" style="left:170px;width:105px"><b class="k">0000000163</b></span><span class="c" style="left:275px;width:211px"><b class="k">OFICINA DE ARCHIVO SUB REGIONAL …</b></span><span class="c" style="left:486px;width:77px"><b class="k">05/07/2017</b></span><span class="c" style="left:563px;width:334px"><b class="k">PREVENCION DE SEGURIDAD</b></span><span class="c" style="left:897px;width:85px"><b class="k">INF 002-201…</b></span><span class="c" style="left:982px;width:86px"><b class="k">PENDIENTE</b></span><span class="c pr" style="left:1068px;width:40px"><svg width="14" height="14" viewBox="0 0 14 14"><g fill="none" stroke="#8b918d" stroke-width="1">
   <path d="M3.500 3.500v-3h5l2 2v1"/><path d="M8.500 .5v2h2" stroke-opacity=".7"/>
   <path d="M3 9.500h-2.500v-6h13v6h-2.500"/>
   <path d="M3.500 7.500h7v6h-7z" fill="#a7ada9"/>
   <path d="M5.500 8.500v3M7 8.500v3M8.500 8.500v3" stroke="#c5c9c6"/>
   <path d="M4.500 12.500h3" stroke="#fff"/>
  </g></svg></span></div>
<div class="r g" style="top:530px"><span class="ic"></span><span class="c md" style="left:15px;width:34px"><i class="ex"></i><b class="k kr">01</b></span><span class="c" style="left:49px;width:121px"><b class="k">DIRECCTO</b></span><span class="c" style="left:170px;width:105px"><b class="k">0000000162</b></span><span class="c" style="left:275px;width:211px"><b class="k">OFICINA DEL REGISTRO DE ESTADO CI…</b></span><span class="c" style="left:486px;width:77px"><b class="k">05/07/2017</b></span><span class="c" style="left:563px;width:334px"><b class="k">COMPRA DE MATERIALES DE ESCRITORIO</b></span><span class="c" style="left:897px;width:85px"><b class="k">INF. Nº 11-2…</b></span><span class="c" style="left:982px;width:86px"><b class="k">ATENDIDO</b></span><span class="c pr" style="left:1068px;width:40px"><svg width="14" height="14" viewBox="0 0 14 14"><g fill="none" stroke="#8b918d" stroke-width="1">
   <path d="M3.500 3.500v-3h5l2 2v1"/><path d="M8.500 .5v2h2" stroke-opacity=".7"/>
   <path d="M3 9.500h-2.500v-6h13v6h-2.500"/>
   <path d="M3.500 7.500h7v6h-7z" fill="#a7ada9"/>
   <path d="M5.500 8.500v3M7 8.500v3M8.500 8.500v3" stroke="#c5c9c6"/>
   <path d="M4.500 12.500h3" stroke="#fff"/>
  </g></svg></span></div>
<div class="r g" style="top:551px"><span class="ic"></span><span class="c md" style="left:15px;width:34px"><i class="ex"></i><b class="k kr">01</b></span><span class="c" style="left:49px;width:121px"><b class="k">DIRECCTO</b></span><span class="c" style="left:170px;width:105px"><b class="k">0000000161</b></span><span class="c" style="left:275px;width:211px"><b class="k">SUB GERENCIA DE DESARROLLO SOCIAL</b></span><span class="c" style="left:486px;width:77px"><b class="k">05/07/2017</b></span><span class="c" style="left:563px;width:334px"><b class="k">ALQUILER DE EQUIPO DE SONIDO Y SILLAS</b></span><span class="c" style="left:897px;width:85px"><b class="k">INF. Nº 320-…</b></span><span class="c" style="left:982px;width:86px"><b class="k">ATENDIDO</b></span><span class="c pr" style="left:1068px;width:40px"><svg width="14" height="14" viewBox="0 0 14 14"><g fill="none" stroke="#8b918d" stroke-width="1">
   <path d="M3.500 3.500v-3h5l2 2v1"/><path d="M8.500 .5v2h2" stroke-opacity=".7"/>
   <path d="M3 9.500h-2.500v-6h13v6h-2.500"/>
   <path d="M3.500 7.500h7v6h-7z" fill="#a7ada9"/>
   <path d="M5.500 8.500v3M7 8.500v3M8.500 8.500v3" stroke="#c5c9c6"/>
   <path d="M4.500 12.500h3" stroke="#fff"/>
  </g></svg></span></div>
<div class="r g" style="top:572px"><span class="ic"></span><span class="c md" style="left:15px;width:34px"><i class="ex"></i><b class="k kr">01</b></span><span class="c" style="left:49px;width:121px"><b class="k">DIRECCTO</b></span><span class="c" style="left:170px;width:105px"><b class="k">0000000160</b></span><span class="c" style="left:275px;width:211px"><b class="k">UNIDAD DE ABASTECIMIENTO Y LOGÍS…</b></span><span class="c" style="left:486px;width:77px"><b class="k">05/07/2017</b></span><span class="c" style="left:563px;width:334px"><b class="k">ATENCION CON BRINDIS POR DIA DEL PADRE</b></span><span class="c" style="left:897px;width:85px"><b class="k">INF. Nº 756-…</b></span><span class="c" style="left:982px;width:86px"><b class="k">ATENDIDO</b></span><span class="c pr" style="left:1068px;width:40px"><svg width="14" height="14" viewBox="0 0 14 14"><g fill="none" stroke="#8b918d" stroke-width="1">
   <path d="M3.500 3.500v-3h5l2 2v1"/><path d="M8.500 .5v2h2" stroke-opacity=".7"/>
   <path d="M3 9.500h-2.500v-6h13v6h-2.500"/>
   <path d="M3.500 7.500h7v6h-7z" fill="#a7ada9"/>
   <path d="M5.500 8.500v3M7 8.500v3M8.500 8.500v3" stroke="#c5c9c6"/>
   <path d="M4.500 12.500h3" stroke="#fff"/>
  </g></svg></span></div>
<div class="r g" style="top:593px"><span class="ic"></span><span class="c md" style="left:15px;width:34px"><i class="ex"></i><b class="k kr">01</b></span><span class="c" style="left:49px;width:121px"><b class="k">DIRECCTO</b></span><span class="c" style="left:170px;width:105px"><b class="k">0000000159</b></span><span class="c" style="left:275px;width:211px"><b class="k">SUB GERENCIA DE DESARROLLO SOCIAL</b></span><span class="c" style="left:486px;width:77px"><b class="k">05/07/2017</b></span><span class="c" style="left:563px;width:334px"><b class="k">COMPRA DE PRODUCTOS PIROTECNICOS</b></span><span class="c" style="left:897px;width:85px"><b class="k">INF. Nº 374-…</b></span><span class="c" style="left:982px;width:86px"><b class="k">ATENDIDO</b></span><span class="c pr" style="left:1068px;width:40px"><svg width="14" height="14" viewBox="0 0 14 14"><g fill="none" stroke="#8b918d" stroke-width="1">
   <path d="M3.500 3.500v-3h5l2 2v1"/><path d="M8.500 .5v2h2" stroke-opacity=".7"/>
   <path d="M3 9.500h-2.500v-6h13v6h-2.500"/>
   <path d="M3.500 7.500h7v6h-7z" fill="#a7ada9"/>
   <path d="M5.500 8.500v3M7 8.500v3M8.500 8.500v3" stroke="#c5c9c6"/>
   <path d="M4.500 12.500h3" stroke="#fff"/>
  </g></svg></span></div>
<div class="r g" style="top:614px"><span class="ic"></span><span class="c md" style="left:15px;width:34px"><i class="ex"></i><b class="k kr">01</b></span><span class="c" style="left:49px;width:121px"><b class="k">DIRECCTO</b></span><span class="c" style="left:170px;width:105px"><b class="k">0000000158</b></span><span class="c" style="left:275px;width:211px"><b class="k">SUB GERENCIA DE DESARROLLO SOCIAL</b></span><span class="c" style="left:486px;width:77px"><b class="k">05/07/2017</b></span><span class="c" style="left:563px;width:334px"><b class="k">COMPRA DE TROFEOS PARA PREMIO</b></span><span class="c" style="left:897px;width:85px"><b class="k">INF. Nº 374-…</b></span><span class="c" style="left:982px;width:86px"><b class="k">ATENDIDO</b></span><span class="c pr" style="left:1068px;width:40px"><svg width="14" height="14" viewBox="0 0 14 14"><g fill="none" stroke="#8b918d" stroke-width="1">
   <path d="M3.500 3.500v-3h5l2 2v1"/><path d="M8.500 .5v2h2" stroke-opacity=".7"/>
   <path d="M3 9.500h-2.500v-6h13v6h-2.500"/>
   <path d="M3.500 7.500h7v6h-7z" fill="#a7ada9"/>
   <path d="M5.500 8.500v3M7 8.500v3M8.500 8.500v3" stroke="#c5c9c6"/>
   <path d="M4.500 12.500h3" stroke="#fff"/>
  </g></svg></span></div>
<div class="r g" style="top:635px"><span class="ic"></span><span class="c md" style="left:15px;width:34px"><i class="ex"></i><b class="k kr">01</b></span><span class="c" style="left:49px;width:121px"><b class="k">DIRECCTO</b></span><span class="c" style="left:170px;width:105px"><b class="k">0000000157</b></span><span class="c" style="left:275px;width:211px"><b class="k">SUB GERENCIA DE DESARROLLO SOCIAL</b></span><span class="c" style="left:486px;width:77px"><b class="k">05/07/2017</b></span><span class="c" style="left:563px;width:334px"><b class="k">ATENCION CON ALIMENTOS</b></span><span class="c" style="left:897px;width:85px"><b class="k">INF. Nº 422-…</b></span><span class="c" style="left:982px;width:86px"><b class="k">ATENDIDO</b></span><span class="c pr" style="left:1068px;width:40px"><svg width="14" height="14" viewBox="0 0 14 14"><g fill="none" stroke="#8b918d" stroke-width="1">
   <path d="M3.500 3.500v-3h5l2 2v1"/><path d="M8.500 .5v2h2" stroke-opacity=".7"/>
   <path d="M3 9.500h-2.500v-6h13v6h-2.500"/>
   <path d="M3.500 7.500h7v6h-7z" fill="#a7ada9"/>
   <path d="M5.500 8.500v3M7 8.500v3M8.500 8.500v3" stroke="#c5c9c6"/>
   <path d="M4.500 12.500h3" stroke="#fff"/>
  </g></svg></span></div>
<div class="r g" style="top:656px"><span class="ic"></span><span class="c md" style="left:15px;width:34px"><i class="ex"></i><b class="k kr">01</b></span><span class="c" style="left:49px;width:121px"><b class="k">DIRECCTO</b></span><span class="c" style="left:170px;width:105px"><b class="k">0000000156</b></span><span class="c" style="left:275px;width:211px"><b class="k">SUB GERENCIA DE DESARROLLO SOCIAL</b></span><span class="c" style="left:486px;width:77px"><b class="k">05/07/2017</b></span><span class="c" style="left:563px;width:334px"><b class="k">COMPRA DE MEDICAMENTOS</b></span><span class="c" style="left:897px;width:85px"><b class="k">INF. Nº 330-…</b></span><span class="c" style="left:982px;width:86px"><b class="k">ATENDIDO</b></span><span class="c pr" style="left:1068px;width:40px"><svg width="14" height="14" viewBox="0 0 14 14"><g fill="none" stroke="#8b918d" stroke-width="1">
   <path d="M3.500 3.500v-3h5l2 2v1"/><path d="M8.500 .5v2h2" stroke-opacity=".7"/>
   <path d="M3 9.500h-2.500v-6h13v6h-2.500"/>
   <path d="M3.500 7.500h7v6h-7z" fill="#a7ada9"/>
   <path d="M5.500 8.500v3M7 8.500v3M8.500 8.500v3" stroke="#c5c9c6"/>
   <path d="M4.500 12.500h3" stroke="#fff"/>
  </g></svg></span></div>
 </div>
 <div id="vs" class="abs">
  <i class="abs" style="left:5px;top:6px;width:0;height:0;border-left:4px solid transparent;border-right:4px solid transparent;border-bottom:4px solid #7c7f90"></i>
  <i class="abs" style="left:5px;top:17px;width:7px;height:55px;border:1px solid #a9acbb;border-radius:4px;background:linear-gradient(90deg,#d2d3dc,#e9e9ef)"></i>
  <i class="abs" style="left:5px;top:361px;width:0;height:0;border-left:4px solid transparent;border-right:4px solid transparent;border-top:4px solid #7c7f90"></i>
 </div>
 <div id="ft" class="abs"><span><b class="k kr">96</b></span></div>
</div>

<div id="st" class="abs"><span class="k">USUARIO : CHERNANDEZ  PERIODO ACTIVO: JUNIO DEL 2017</span></div>
</body>
</html>
